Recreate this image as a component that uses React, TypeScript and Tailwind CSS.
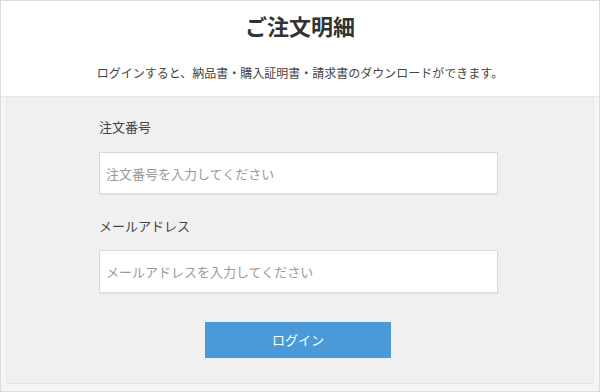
export default function App() {
  const font = { fontFamily: '"Noto Sans CJK JP", "Noto Sans", sans-serif' };
  return (
    <div
      className="w-[600px] h-[392px] bg-white border border-[#dcdcdc] flex flex-col text-[#333]"
      style={font}
    >
      <div className="h-[95px] flex flex-col items-center">
        <h1 className="mt-[8px] text-[22px] leading-[32px] font-bold text-[#333]">ご注文明細</h1>
        <p className="mt-[24px] text-[12px] leading-[16px] text-[#444]">
          ログインすると、納品書・購入証明書・請求書のダウンロードができます。
        </p>
      </div>
      <div className="flex-1 flex flex-col bg-[#f5f5f5] border-t border-[#e8e8e8]">
        <div className="flex-1 mx-[5px] bg-[#f0f0f0] border-x border-b border-[#e6e6e6]">
          <div className="ml-[92px] w-[399px] pt-[20px] flex flex-col">
            <label className="text-[13px] leading-[20px] text-[#444]">注文番号</label>
            <input
              className="mt-[15px] h-[42px] w-full bg-white border border-[#dadada] px-[6px] text-[13px] text-[#333] placeholder:text-[#999] outline-none shadow-[0_1px_1px_rgba(0,0,0,0.05)]"
              placeholder="注文番号を入力してください"
              style={font}
            />
            <label className="mt-[22px] text-[13px] leading-[20px] text-[#444]">メールアドレス</label>
            <input
              className="mt-[14px] h-[43px] w-full bg-white border border-[#dadada] px-[6px] text-[13px] text-[#333] placeholder:text-[#999] outline-none shadow-[0_1px_1px_rgba(0,0,0,0.05)]"
              placeholder="メールアドレスを入力してください"
              style={font}
            />
            <div className="mt-[29px] flex">
              <button
                className="ml-[106px] w-[186px] h-[36px] bg-[#4a9ad9] text-white text-[13px]"
                style={font}
              >
                ログイン
              </button>
            </div>
          </div>
        </div>
        <div className="h-[7px]" />
      </div>
    </div>
  );
}
